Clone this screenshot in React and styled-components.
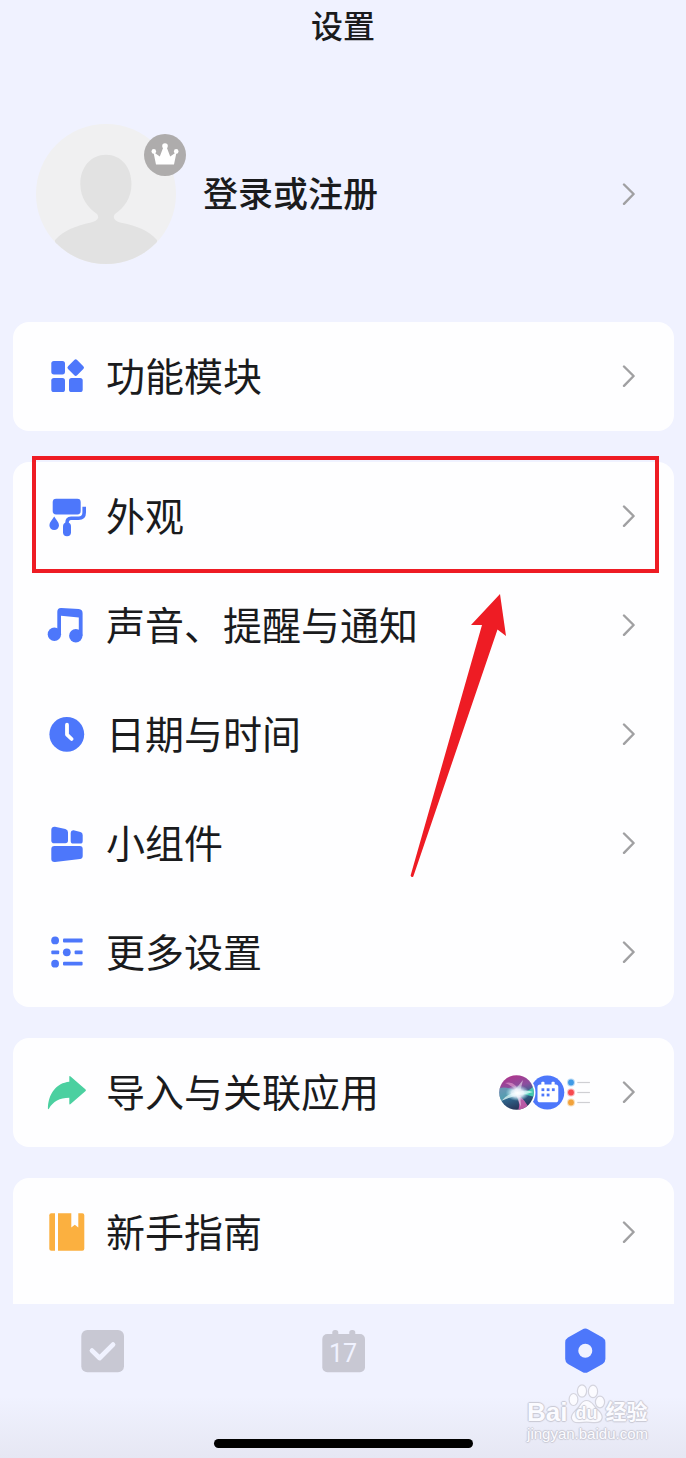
import React from 'react'
import styled, { createGlobalStyle, ThemeProvider } from 'styled-components'

const theme = {
  color: {
    background: '#f0f2ff',
    card: '#fefeff',
    text: '#1a1b1d',
    primary: '#4d77fb',
    success: '#4bd0a0',
    warning: '#fbb040',
    danger: '#ee1c24',
    muted: '#a0a0a2',
    inactive: '#c8c8d3',
  },
}

const GlobalStyle = createGlobalStyle`
  * {
    box-sizing: border-box;
  }

  body {
    background: ${theme.color.background};
    color: ${theme.color.text};
    font-family: 'Noto Sans CJK SC', sans-serif;
    margin: 0;
  }
`

const Screen = styled.div`
  display: flex;
  flex-direction: column;
  min-height: 100vh;
  overflow: hidden;
`

const Header = styled.header`
  display: flex;
  height: 52px;
  justify-content: center;
`

const Title = styled.h1`
  font-size: 32px;
  font-weight: 500;
  line-height: 48px;
  margin: 0;
`

const Profile = styled.a`
  align-items: center;
  color: inherit;
  display: flex;
  gap: 27px;
  padding: 72px 51px 58px 36px;
  text-decoration: none;
`

const AvatarWrapper = styled.span`
  display: flex;
  position: relative;
`

const Badge = styled.span`
  display: flex;
  position: absolute;
  right: -10px;
  top: 10px;
`

const ProfileName = styled.span`
  flex: 1;
  font-size: 35px;
  font-weight: 500;
  line-height: 48px;
  padding-bottom: 4px;
`

const Content = styled.main`
  display: flex;
  flex: 1;
  flex-direction: column;
  gap: 31px;
  padding: 0 12px 0 13px;
`

const Card = styled.section`
  background: ${p => p.theme.color.card};
  border-radius: ${p => (p.$open ? '16px 16px 0 0' : '16px')};
  flex: ${p => (p.$open ? '1' : 'none')};
  padding-bottom: ${p => (p.$open ? '17px' : '0')};
  position: relative;
`

const Row = styled.a`
  align-items: center;
  color: inherit;
  display: flex;
  height: 109px;
  padding: 0 39px 0 34px;
  position: relative;
  text-decoration: none;
`

const RowIcon = styled.svg`
  color: ${p => p.theme.color[p.$color]};
  fill: currentColor;
  flex: none;
  height: 41px;
  margin-right: 18px;
  width: 41px;
`

const RowLabel = styled.span`
  flex: 1;
  font-size: 39px;
  font-weight: 400;
  line-height: 48px;
  padding-bottom: 6px;
`

const Extra = styled.span`
  display: flex;
  margin-right: 31px;
`

const StyledChevron = styled.svg`
  fill: none;
  flex: none;
  stroke: ${p => p.theme.color.muted};
  stroke-linecap: round;
  stroke-linejoin: round;
  stroke-width: 2.4;
`

const Highlight = styled.span`
  border: 4px solid ${p => p.theme.color.danger};
  bottom: -2px;
  left: 19px;
  pointer-events: none;
  position: absolute;
  right: 15px;
  top: -6px;
  z-index: 1;
`

const Pointer = styled.svg`
  fill: ${p => p.theme.color.danger};
  pointer-events: none;
  position: absolute;
  right: 167px;
  top: 132px;
`

const BottomBar = styled.footer`
  align-items: center;
  background: linear-gradient(#f0f2ff 60%, #e6e7f3);
  display: flex;
  flex-direction: column;
  gap: 66px;
  padding: 24px 0 10px;
  position: relative;
`

const Tabs = styled.nav`
  align-self: stretch;
  display: flex;
  justify-content: space-between;
  padding: 0 79px 0 80px;
`

const Tab = styled.button`
  background: none;
  border: 0;
  color: ${p => (p.$active ? p.theme.color.primary : p.theme.color.inactive)};
  cursor: pointer;
  display: flex;
  padding: 0;

  > svg {
    fill: currentColor;
  }
`

const DayNumber = styled.text`
  fill: ${p => p.theme.color.background};
  font-family: Roboto, sans-serif;
  font-size: 25px;
  font-weight: 400;
`

const HomeIndicator = styled.div`
  background: #000;
  border-radius: 5px;
  height: 9px;
  width: 259px;
`

const Watermark = styled.div`
  color: #fbfbff;
  font-family: 'Liberation Sans', 'Noto Sans CJK SC', sans-serif;
  pointer-events: none;
  position: absolute;
  right: 38px;
  text-shadow: 1px 0 1px #c9c9d4, -1px 0 1px #c9c9d4, 0 1px 1px #c9c9d4, 0 -1px 1px #c9c9d4;
  top: 80px;
`

const WatermarkBrand = styled.div`
  align-items: flex-end;
  display: flex;
  font-weight: 700;
  height: 40px;
`

const WatermarkText = styled.span`
  font-size: ${p => (p.$large ? '26px' : '21px')};
  line-height: 24px;
`

const Paw = styled.span`
  align-items: flex-end;
  display: flex;
  font-size: 18px;
  height: 40px;
  justify-content: center;
  line-height: 22px;
  position: relative;
  width: 38px;

  > svg {
    left: 0;
    position: absolute;
    top: 0;
  }

  > span {
    position: relative;
  }
`

const WatermarkUrl = styled.div`
  font-family: 'Liberation Sans', sans-serif;
  font-size: 15px;
  line-height: 20px;
`

const Chevron = () => (
  <StyledChevron width="13" height="23" viewBox="0 0 13 23" aria-hidden="true">
    <path d="M2 1.5 L11.6 11 L2 20.8" />
  </StyledChevron>
)

const Avatar = () => (
  <svg width="140" height="140" viewBox="0 0 140 140" aria-hidden="true">
    <defs>
      <clipPath id="avatar">
        <circle cx="70" cy="70" r="70" />
      </clipPath>
    </defs>
    <g clipPath="url(#avatar)">
      <rect width="140" height="140" fill="#f0f0f1" />
      <path
        fill="#e2e2e2"
        d="M70 30.7 C85 30.7 95.5 43 95.5 60 C95.5 74 88 84 79 90 C76 94 79 97 84 98.5 C101 102 112 106 121 116 V140 H19 V116 C28 106 40 102 55 98.5 C61 97 64 94 61 90 C52 84 44.3 74 44.3 60 C44.3 43 55 30.7 70 30.7 Z"
      />
    </g>
  </svg>
)

const Crown = () => (
  <svg width="42" height="42" viewBox="0 0 42 42" aria-hidden="true">
    <circle cx="21" cy="21" r="21" fill="#aeacac" />
    <g fill="#fff">
      <path d="M12 30.5 L9.4 18 L15.8 22.5 L19.4 13 H22.6 L26.2 22.5 L32.6 18 L30 30.5 Z" />
      <circle cx="21" cy="12" r="2.8" />
      <circle cx="9.8" cy="17.4" r="2.3" />
      <circle cx="32.2" cy="17.4" r="2.3" />
    </g>
  </svg>
)

const ModulesIcon = () => (
  <>
    <rect x="4.3" y="5" width="13.7" height="13.4" rx="2.6" />
    <rect x="4.3" y="22" width="13.7" height="14" rx="2.6" />
    <rect x="22" y="22" width="13.7" height="14" rx="2.6" />
    <rect x="22.3" y="5.3" width="12.8" height="12.8" rx="2" transform="rotate(45 28.7 11.7)" />
  </>
)

const RollerIcon = () => (
  <>
    <rect x="5.7" y="2.7" width="28" height="15.8" rx="3.4" />
    <path
      d="M37.2 10.7 V16.5 Q37.2 22.3 31.5 22.3 H24 Q20 22.3 20 27"
      fill="none"
      stroke="currentColor"
      strokeWidth="3.6"
    />
    <rect x="16" y="26.5" width="8" height="13.7" rx="4" />
    <path d="M7.2 20.5 C9 23.5 12 26.3 12 29.3 A4.8 4.8 0 0 1 2.4 29.3 C2.4 26.3 5.4 23.5 7.2 20.5 Z" />
  </>
)

const MusicIcon = () => (
  <>
    <circle cx="7.4" cy="29.2" r="6.7" />
    <circle cx="28.8" cy="30.8" r="6.7" />
    <path d="M10.3 29 V6.8 Q10.3 2.8 14.3 3 L31.8 4 Q35.6 4.4 35.6 8.2 V30.8 H31.8 V12.6 L14 10.8 V29 Z" />
  </>
)

const ClockIcon = () => (
  <>
    <circle cx="19.8" cy="20.3" r="17.4" />
    <path
      d="M20 10.7 V20.6 L24.6 25"
      fill="none"
      stroke="#fff"
      strokeLinecap="round"
      strokeLinejoin="round"
      strokeWidth="3.8"
    />
  </>
)

const WidgetsIcon = () => (
  <>
    <path d="M8 3.7 L18.4 6 Q21 6.7 21 9.2 V17.6 Q21 20.2 18.4 20.2 H7.2 Q4.3 20.2 4.3 17.4 V6.8 Q4.5 3.4 8 3.7 Z" />
    <path d="M26.6 7.3 L33.4 9 Q35.7 9.7 35.7 12 V18 Q35.7 20.6 33.2 20.6 H26.2 Q23.7 20.6 23.7 18 V9.8 Q23.8 7 26.6 7.3 Z" />
    <path d="M7.4 23 H32.8 Q35.7 23 35.7 26 V33 Q35.7 35.6 33 36 L8 39 Q4.3 39.2 4.3 35.8 V26 Q4.3 23 7.4 23 Z" />
  </>
)

const MoreIcon = () => (
  <>
    <circle cx="8.1" cy="8.4" r="3.9" />
    <rect x="16" y="6.6" width="19.6" height="3.8" rx="1" />
    <rect x="4.3" y="18.4" width="7.9" height="3.8" rx="1" />
    <circle cx="19.8" cy="20.3" r="3.9" />
    <rect x="27.6" y="18.4" width="8" height="3.8" rx="1" />
    <circle cx="8.1" cy="31.7" r="3.9" />
    <rect x="16" y="29.8" width="19.6" height="3.8" rx="1" />
  </>
)

const ImportIcon = () => (
  <path d="M23.3 4.3 L38.6 17.6 Q39.3 18.3 38.6 19 L23.3 32.3 Q22.3 32.8 22.3 31.6 V25.8 C12.5 25.8 6.2 29.5 1.9 36.7 Q1 37.8 0.9 36.4 C1.4 21.5 9.5 11 22.3 9.8 V4.8 Q22.3 3.5 23.3 4.3 Z" />
)

const GuideIcon = () => (
  <>
    <path d="M4.3 1.3 H8 V38.7 H4.3 Q2.3 38.7 2.3 36.7 V3.3 Q2.3 1.3 4.3 1.3 Z" />
    <path d="M11 1.3 H24.3 V15.6 L27.8 12.8 L31.3 15.6 V1.3 H35.3 Q37.3 1.3 37.3 3.3 V36.7 Q37.3 38.7 35.3 38.7 H11 Z" />
  </>
)

const LinkedApps = () => (
  <svg width="92" height="36" viewBox="0 0 92 36" aria-hidden="true">
    <defs>
      <linearGradient id="siri" x1="0.3" y1="0" x2="0.6" y2="1">
        <stop offset="0" stopColor="#b0358c" />
        <stop offset="0.35" stopColor="#8a4f9f" />
        <stop offset="0.6" stopColor="#2f668c" />
        <stop offset="1" stopColor="#27294d" />
      </linearGradient>
      <radialGradient id="glow">
        <stop offset="0" stopColor="#fff" />
        <stop offset="0.5" stopColor="#eef8ff" stopOpacity="0.85" />
        <stop offset="1" stopColor="#a8e8f0" stopOpacity="0" />
      </radialGradient>
      <clipPath id="orb">
        <circle cx="17.5" cy="17.5" r="17.3" />
      </clipPath>
    </defs>
    <circle cx="48.3" cy="17.5" r="17" fill="#4d77fb" />
    <circle cx="17.5" cy="17.5" r="19" fill="#fff" />
    <g clipPath="url(#orb)">
      <rect width="36" height="36" fill="url(#siri)" />
      <path d="M0 13 Q12 11 20 19 Q8 18 0 28 Z" fill="#58b8be" opacity="0.7" />
      <path d="M17 18 Q27 20 36 10 V22 Q26 19 17 18 Z" fill="#46d6b5" opacity="0.9" />
      <path d="M17 18 Q27 25 31 36 H19 Q22 28 17 18 Z" fill="#d45fb0" opacity="0.85" />
      <path d="M6 8 Q17 5 20 18 Q13 10 6 8 Z" fill="#e9a0d2" opacity="0.6" />
      <path d="M2 26 Q11 17 19 17 Q27 14 34 17 Q25 20 20 20 Q11 22 2 26 Z" fill="#d8fbf4" opacity="0.8" />
      <path d="M15 16 L24 5 L21 17 L22 32 L17 20 Z" fill="#fff" opacity="0.5" />
      <ellipse cx="18.5" cy="18" rx="12" ry="8" fill="url(#glow)" />
    </g>
    <g fill="#fff">
      <rect x="38.5" y="9.5" width="20.8" height="17.8" rx="2.6" />
      <rect x="42.3" y="6.8" width="3.2" height="5" rx="1" />
      <rect x="52.5" y="6.8" width="3.2" height="5" rx="1" />
    </g>
    <g fill="#4d77fb">
      <rect x="42.5" y="13.3" width="2.8" height="2.8" />
      <rect x="47.7" y="13.3" width="2.8" height="2.8" />
      <rect x="52.9" y="13.3" width="2.8" height="2.8" />
      <rect x="42.5" y="18.6" width="2.8" height="2.8" />
      <rect x="47.7" y="18.6" width="2.8" height="2.8" />
    </g>
    {[
      [7.5, '#3f9ae6'],
      [17.5, '#f7494f'],
      [27.5, '#f2a23a'],
    ].map(([y, color]) => (
      <g key={color}>
        <circle cx="72" cy={y} r="4" fill={color} opacity="0.35" />
        <circle cx="72" cy={y} r="2.9" fill={color} />
        <rect x="78.3" y={y - 0.6} width="12.6" height="1.2" fill="#cfcfd3" />
      </g>
    ))}
  </svg>
)

const SettingRow = ({ children, color = 'primary', extra, icon: Icon, label }) => (
  <Row href="#">
    <RowIcon $color={color} viewBox="0 0 41 41" aria-hidden="true">
      <Icon />
    </RowIcon>
    <RowLabel>{label}</RowLabel>
    {extra && <Extra>{extra}</Extra>}
    <Chevron />
    {children}
  </Row>
)

const BottomTabs = () => (
  <Tabs>
    <Tab type="button" aria-label="任务">
      <svg width="45" height="45" viewBox="0 0 45 45">
        <rect x="1.3" y="2" width="42.7" height="42.3" rx="6" />
        <path
          d="M12 22.6 L19.6 30 L33 16.6"
          fill="none"
          stroke="#f0f2ff"
          strokeLinecap="round"
          strokeLinejoin="round"
          strokeWidth="4.8"
        />
      </svg>
    </Tab>
    <Tab type="button" aria-label="日历">
      <svg width="45" height="45" viewBox="0 0 45 45">
        <rect x="1.3" y="6" width="42.7" height="38.3" rx="5" />
        <rect x="11.3" y="2" width="6" height="8" rx="2.6" />
        <rect x="28.3" y="2" width="6" height="8" rx="2.6" />
        <DayNumber x="22" y="34" textAnchor="middle">
          17
        </DayNumber>
      </svg>
    </Tab>
    <Tab type="button" aria-label="设置" $active>
      <svg width="45" height="45" viewBox="0 0 45 45">
        <path d="M20.3 1.4 Q23.3 -0.2 26.3 1.4 L40.6 9.5 Q43.4 11.2 43.4 14.5 V31 Q43.4 34.2 40.6 35.9 L26.3 44 Q23.3 45.7 20.3 44 L6 35.9 Q3.2 34.2 3.2 31 V14.5 Q3.2 11.2 6 9.5 Z" />
        <circle cx="23.3" cy="22.8" r="7" fill="#f0f2ff" />
      </svg>
    </Tab>
  </Tabs>
)

const App = () => (
  <ThemeProvider theme={theme}>
    <GlobalStyle />
    <Screen>
      <Header>
        <Title>设置</Title>
      </Header>

      <Profile href="#">
        <AvatarWrapper>
          <Avatar />
          <Badge>
            <Crown />
          </Badge>
        </AvatarWrapper>
        <ProfileName>登录或注册</ProfileName>
        <Chevron />
      </Profile>

      <Content>
        <Card>
          <SettingRow icon={ModulesIcon} label="功能模块" />
        </Card>

        <Card>
          <SettingRow icon={RollerIcon} label="外观">
            <Highlight />
          </SettingRow>
          <SettingRow icon={MusicIcon} label="声音、提醒与通知" />
          <SettingRow icon={ClockIcon} label="日期与时间" />
          <SettingRow icon={WidgetsIcon} label="小组件" />
          <SettingRow icon={MoreIcon} label="更多设置" />
          <Pointer width="97" height="284" viewBox="0 0 97 284" aria-hidden="true">
            <path d="M90 0 L96 42 L87.5 35.5 L3.3 282.5 Q1.5 284 0.6 281.5 L72 31 L61 31 Z" />
          </Pointer>
        </Card>

        <Card>
          <SettingRow color="success" extra={<LinkedApps />} icon={ImportIcon} label="导入与关联应用" />
        </Card>

        <Card $open>
          <SettingRow color="warning" icon={GuideIcon} label="新手指南" />
        </Card>
      </Content>

      <BottomBar>
        <BottomTabs />
        <HomeIndicator />
        <Watermark>
          <WatermarkBrand>
            <WatermarkText $large>Bai</WatermarkText>
            <Paw>
              <svg width="38" height="40" viewBox="0 0 38 40" aria-hidden="true">
                <g fill="#fbfbff" stroke="#d4d4de" strokeWidth="1.2">
                  <ellipse cx="5.5" cy="15.5" rx="4.4" ry="6" />
                  <ellipse cx="14" cy="7" rx="4.6" ry="6.2" />
                  <ellipse cx="25" cy="7.4" rx="4.6" ry="6.2" />
                  <ellipse cx="32" cy="18" rx="4.6" ry="5.8" />
                  <path d="M18.5 16.5 C24 16.5 25 21 29 25 C33 28.5 35 31 34 34.5 C33 38.5 29 39 25 38.6 Q18.5 37.6 12 38.6 C8 39 4 38 3.4 34 C3 30 6 28 9 25 C13 21 13 16.5 18.5 16.5 Z" />
                </g>
              </svg>
              <span>du</span>
            </Paw>
            <WatermarkText>经验</WatermarkText>
          </WatermarkBrand>
          <WatermarkUrl>jingyan.baidu.com</WatermarkUrl>
        </Watermark>
      </BottomBar>
    </Screen>
  </ThemeProvider>
)

export default App
